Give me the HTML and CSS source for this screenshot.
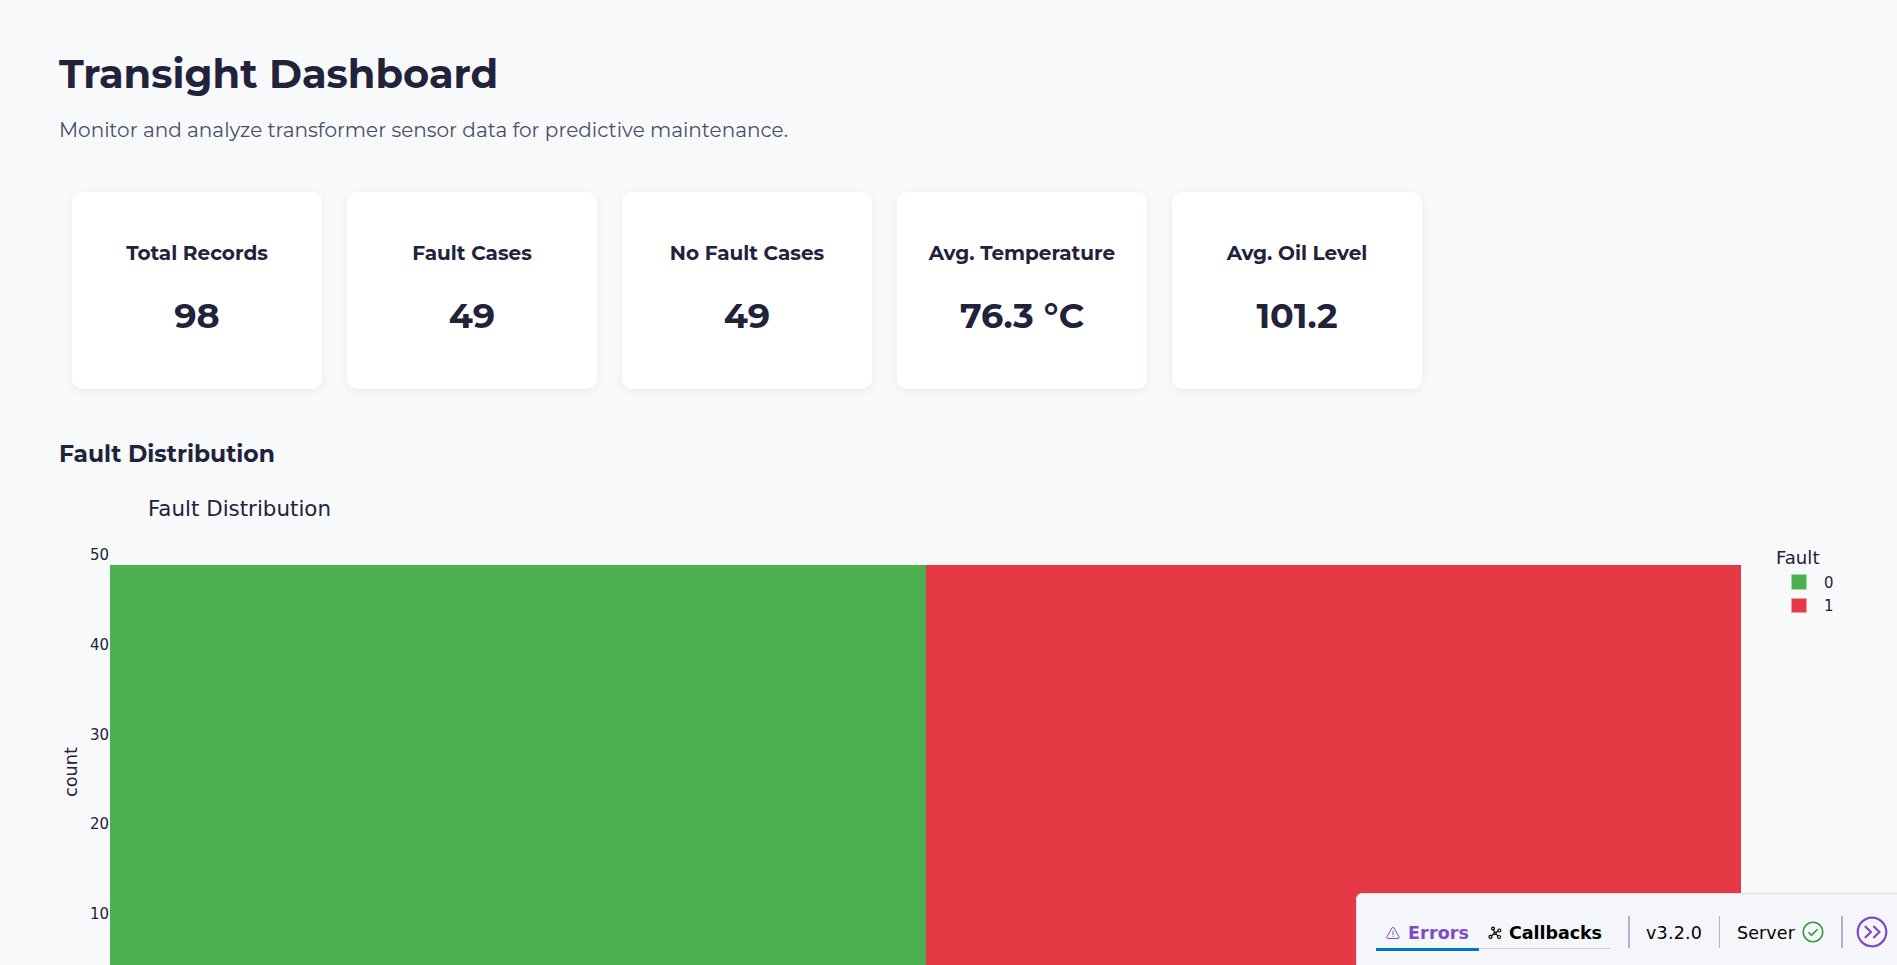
FILE: index.html
```html
<!DOCTYPE html>
<html lang="en">
<head>
<meta charset="utf-8">
<title>Transight Dashboard</title>
<link rel="stylesheet" href="styles.css">
</head>
<body>
<main class="page">
  <h1 class="title">Transight Dashboard</h1>
  <p class="subtitle">Monitor and analyze transformer sensor data for predictive maintenance.</p>
  <section class="cards">
    <article class="card"><h4 class="label">Total Records</h4><p class="value">98</p></article>
    <article class="card"><h4 class="label">Fault Cases</h4><p class="value">49</p></article>
    <article class="card"><h4 class="label">No Fault Cases</h4><p class="value">49</p></article>
    <article class="card"><h4 class="label">Avg. Temperature</h4><p class="value">76.3 °C</p></article>
    <article class="card"><h4 class="label">Avg. Oil Level</h4><p class="value">101.2</p></article>
  </section>
  <h3 class="heading">Fault Distribution</h3>
  <svg class="chart" width="1779" height="485" viewBox="59 480 1779 485">
    <path class="grid" d="M110 555.5H1741"/>
    <path fill="#4caf50" d="M110 565H926V965H110z"/>
    <path fill="#e63946" d="M926 565H1741V965H926z"/>
    <text class="chart-title" x="148" y="516" textLength="183" lengthAdjust="spacingAndGlyphs">Fault Distribution</text>
    <g class="tick">
      <text x="90" y="560" textLength="19" lengthAdjust="spacingAndGlyphs">50</text>
      <text x="90" y="650" textLength="19" lengthAdjust="spacingAndGlyphs">40</text>
      <text x="90" y="740" textLength="19" lengthAdjust="spacingAndGlyphs">30</text>
      <text x="90" y="829" textLength="19" lengthAdjust="spacingAndGlyphs">20</text>
      <text x="90" y="919" textLength="19" lengthAdjust="spacingAndGlyphs">10</text>
      <text x="1824" y="588" textLength="9.5" lengthAdjust="spacingAndGlyphs">0</text>
      <text x="1824" y="611" textLength="9.5" lengthAdjust="spacingAndGlyphs">1</text>
    </g>
    <text class="axis" transform="translate(77 797) rotate(-90)" textLength="50" lengthAdjust="spacingAndGlyphs">count</text>
    <text class="axis" x="1776" y="564" textLength="43.5" lengthAdjust="spacingAndGlyphs">Fault</text>
    <path fill="#4caf50" stroke="#a5d8ab" d="M1791.5 574.5h15v15h-15z"/>
    <path fill="#e63946" stroke="#f09ba4" d="M1791.5 598.5h15v14h-15z"/>
  </svg>
</main>
<aside class="devtools">
  <nav class="tabs">
    <button class="tab active"><svg class="tab-icon" viewBox="0 0 14 14"><path d="M6.2 1.6Q7 .5 7.8 1.6L13 10.8Q13.500 12.300 12.200 12.500H1.800Q.5 12.300 1 10.800zM7 5v3.700M7 9.800v1"/></svg><span class="tab-text errors">Errors</span></button>
    <button class="tab"><svg class="tab-icon wide" viewBox="0 0 14 14"><circle cx="5" cy="2.500" r="1.400"/><circle cx="2.500" cy="10.900" r="1.500"/><circle cx="11.300" cy="4.500" r="1.500"/><circle cx="11" cy="11" r="1.500"/><circle cx="7" cy="7.200" r="1.100"/><path d="M5.500 3.800 6.500 6M8 6.500l2.200-1.400M7.900 7.800l2.200 2.300M6.200 7.700 3.600 9.700"/></svg><span class="tab-text callbacks">Callbacks</span></button>
  </nav>
  <i class="rule thick first"></i>
  <span class="version">v3.2.0</span>
  <i class="rule"></i>
  <span class="server">Server</span>
  <svg class="check" viewBox="0 0 22 22"><circle cx="11" cy="11" r="9.800"/><path d="m6.500 11.300 3 3 6-6"/></svg>
  <i class="rule thick"></i>
  <svg class="collapse" viewBox="0 0 32 32"><circle cx="16" cy="16" r="14.300"/><path d="m9.500 10.700 5.500 5.300-5.500 5.300M18 10.700l5.500 5.300-5.500 5.300"/></svg>
</aside>
</body>
</html>
```
FILE: styles.css
```css
* { box-sizing: border-box; }
body { margin: 0; height: 965px; overflow: hidden; background: #f8f9fb; color: #22223b; font-family: Montserrat, Inter, sans-serif; }
.page { padding: 50px 59px 0; }
.title { margin: 0; font-size: 40px; line-height: 48px; font-weight: 700; white-space: nowrap; }
.subtitle { margin: 19px 0 0; font-size: 20px; line-height: 26px; font-weight: 400; color: #4a4e69; }
.cards { display: flex; gap: 25px; margin: 49px 0 0 13px; }
.card { width: 250px; height: 197px; border-radius: 10px; background: #fff; box-shadow: 0 2px 10px rgba(0,0,0,.06); text-align: center; }
.label { margin: 48px 0 0; font-size: 20px; line-height: 26px; font-weight: 700; }
.value { margin: 29px 0 0; font-size: 35px; line-height: 42px; font-weight: 700; }
.heading { margin: 50px 0 0; font-size: 23.400px; line-height: 30px; font-weight: 700; }
.chart { display: block; margin-top: 11px; font-family: "DejaVu Sans", sans-serif; fill: #22223b; }
.grid { stroke: #fff; stroke-width: 1; }
.chart-title { font-size: 21.500px; }
.tick { font-size: 15px; }
.axis { font-size: 17.500px; }
.devtools { position: fixed; left: 1356px; top: 893px; right: 0; height: 80px; display: flex; align-items: flex-start; padding: 22px 0 0 19px; background: #f4f6fa; border: 1px solid #d8dce9; border-right: 0; border-radius: 6px 0 0 0; color: #000; font: 17.500px/32px "DejaVu Sans", sans-serif; }
.tabs { display: flex; }
.tab { display: flex; align-items: center; height: 33px; padding: 1px 0 0 9px; border: 0; border-bottom: 1px solid #c9d4e6; background: none; color: #000; font: 700 17.500px/30px "DejaVu Sans", sans-serif; width: 132px; }
.tab.active { height: 35px; width: 103px; padding: 1px 0 0 10px; border-bottom: 3px solid #0071ce; color: #7f4bc4; }
.tab-icon { width: 14px; height: 14px; margin-right: 8px; fill: none; stroke: currentColor; stroke-width: 1; }
.tab-icon.wide { margin-right: 7px; stroke-width: 1.200; }
.errors { letter-spacing: 0.150px; }
.callbacks { letter-spacing: -0.060px; }
.rule { width: 1px; height: 32px; background: #aeb3cf; }
.thick { width: 2px; }
.first { margin-left: 17px; }
.version { width: 56px; margin: 1px 17px 0 16px; letter-spacing: 0.200px; }
.server { width: 58px; margin: 1px 7px 0 17px; letter-spacing: 0.100px; }
.check { width: 22px; height: 22px; margin: 5px 17px 0 0; fill: none; stroke: #389a3c; stroke-width: 1.600; }
.collapse { width: 32px; height: 32px; margin-left: 12.500px; fill: none; stroke: #7f4bc4; stroke-width: 2.200; stroke-linecap: round; stroke-linejoin: round; }
```
